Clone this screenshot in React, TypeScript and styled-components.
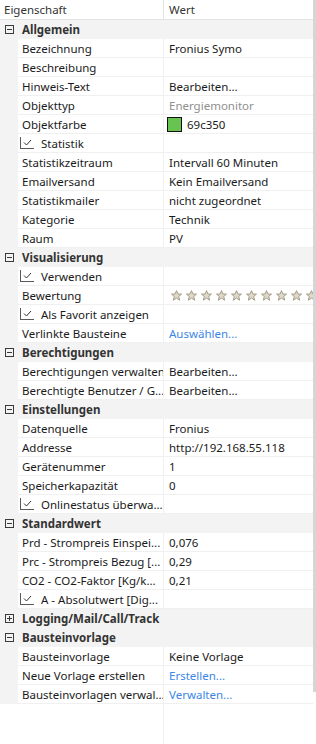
import React from 'react';
import styled, { createGlobalStyle } from 'styled-components';

const GlobalStyle = createGlobalStyle`
  html, body {
    margin: 0;
    padding: 0;
    background: #ffffff;
  }
  body {
    font-family: "Noto Sans", "Open Sans", sans-serif;
    font-size: 11.5px;
    color: #1a1a1a;
  }
`;

const Frame = styled.div`
  display: grid;
  grid-template-columns: 313px 3px;
  width: 316px;
  height: 744px;
  overflow: hidden;
`;

const Grid = styled.div`
  display: flex;
  flex-direction: column;
  min-width: 0;
`;

const ScrollTrack = styled.div`
  display: flex;
  flex-direction: column;
`;

const ScrollThumb = styled.div`
  height: 692px;
  background: #d6d6d6;
`;

const HeaderRow = styled.div`
  display: grid;
  grid-template-columns: 164px 1fr;
  height: 20px;
  box-sizing: border-box;
  border-bottom: 1px solid #e3e3e3;
  color: #333333;
`;

const HeaderCell = styled.div<{ $first?: boolean }>`
  display: flex;
  align-items: center;
  padding-left: ${(p) => (p.$first ? '4px' : '5px')};
  border-right: ${(p) => (p.$first ? '1px solid #e3e3e3' : 'none')};
`;

const SectionRow = styled.div`
  display: grid;
  grid-template-columns: 18px 1fr;
  height: 19px;
  background: #f3f3f3;
  align-items: center;
`;

const SectionTitle = styled.div`
  font-weight: 700;
  color: #333333;
  padding-left: 4px;
`;

const ExpanderBox = styled.div`
  display: flex;
  justify-content: center;
`;

const ItemRow = styled.div`
  display: grid;
  grid-template-columns: 18px 146px 1fr;
  height: 19px;
`;

const Gutter = styled.div`
  background: #f3f3f3;
`;

const Cell = styled.div<{ $label?: boolean; $tone?: 'muted' | 'link' }>`
  display: flex;
  align-items: center;
  gap: 5px;
  box-sizing: border-box;
  background: #ffffff;
  border-bottom: 1px solid #f0f0f0;
  border-right: ${(p) => (p.$label ? '1px solid #f0f0f0' : 'none')};
  padding-left: ${(p) => (p.$label ? '4px' : '5px')};
  white-space: nowrap;
  overflow: hidden;
  color: ${(p) => (p.$tone === 'muted' ? '#8f8f8f' : p.$tone === 'link' ? '#3b86e6' : '#1a1a1a')};
`;

const CheckBox = styled.span`
  display: inline-flex;
  align-items: center;
  justify-content: center;
  width: 13px;
  height: 11px;
  margin-left: -2px;
  margin-right: 2px;
  border-left: 1px solid #5a5a5a;
  border-bottom: 1px solid #5a5a5a;
  flex-shrink: 0;
`;

const Swatch = styled.span<{ $color: string }>`
  width: 13px;
  height: 13px;
  margin-left: -2px;
  background: ${(p) => p.$color};
  border: 1px solid #111111;
  flex-shrink: 0;
`;

const Stars = styled.span`
  display: flex;
  gap: 4px;
  margin-left: 2px;
`;

const Filler = styled.div`
  flex: 1;
  display: grid;
  grid-template-columns: 164px 1fr;
`;

const FillerLeft = styled.div`
  border-right: 1px solid #f0f0f0;
`;

const Expander: React.FC<{ open: boolean }> = ({ open }) => (
  <svg width="9" height="9" viewBox="0 0 9 9">
    <rect x="0.5" y="0.5" width="8" height="8" fill="none" stroke="#3a3a3a" />
    <line x1="2" y1="4.5" x2="7" y2="4.5" stroke="#3a3a3a" />
    {!open && <line x1="4.5" y1="2" x2="4.5" y2="7" stroke="#3a3a3a" />}
  </svg>
);

const Check = () => (
  <svg width="9" height="7" viewBox="0 0 9 7">
    <polyline points="1,3.5 3.5,6 8,1" fill="none" stroke="#333" strokeWidth="1" />
  </svg>
);

const Star = () => (
  <svg width="11" height="11" viewBox="0 0 11 11">
    <polygon
      points="5.5,0.6 6.9,4 10.5,4.1 7.7,6.4 8.7,10.2 5.5,8.1 2.3,10.2 3.3,6.4 0.5,4.1 4.1,4"
      fill="#ded9cb"
      stroke="#a59d88"
      strokeWidth="1"
    />
  </svg>
);

type Item = {
  label: string;
  value?: React.ReactNode;
  check?: boolean;
  tone?: 'muted' | 'link';
};

type Section = { title: string; open: boolean; items: Item[] };

const sections: Section[] = [
  {
    title: 'Allgemein',
    open: true,
    items: [
      { label: 'Bezeichnung', value: 'Fronius Symo' },
      { label: 'Beschreibung' },
      { label: 'Hinweis-Text', value: 'Bearbeiten...' },
      { label: 'Objekttyp', value: 'Energiemonitor', tone: 'muted' },
      {
        label: 'Objektfarbe',
        value: (
          <>
            <Swatch $color="#69c350" />
            69c350
          </>
        ),
      },
      { label: 'Statistik', check: true },
      { label: 'Statistikzeitraum', value: 'Intervall 60 Minuten' },
      { label: 'Emailversand', value: 'Kein Emailversand' },
      { label: 'Statistikmailer', value: 'nicht zugeordnet' },
      { label: 'Kategorie', value: 'Technik' },
      { label: 'Raum', value: 'PV' },
    ],
  },
  {
    title: 'Visualisierung',
    open: true,
    items: [
      { label: 'Verwenden', check: true },
      {
        label: 'Bewertung',
        value: (
          <Stars>
            {Array.from({ length: 10 }).map((_, i) => (
              <Star key={i} />
            ))}
          </Stars>
        ),
      },
      { label: 'Als Favorit anzeigen', check: true },
      { label: 'Verlinkte Bausteine', value: 'Auswählen...', tone: 'link' },
    ],
  },
  {
    title: 'Berechtigungen',
    open: true,
    items: [
      { label: 'Berechtigungen verwalten', value: 'Bearbeiten...' },
      { label: 'Berechtigte Benutzer / G...', value: 'Bearbeiten...' },
    ],
  },
  {
    title: 'Einstellungen',
    open: true,
    items: [
      { label: 'Datenquelle', value: 'Fronius' },
      { label: 'Addresse', value: 'http://192.168.55.118' },
      { label: 'Gerätenummer', value: '1' },
      { label: 'Speicherkapazität', value: '0' },
      { label: 'Onlinestatus überwa...', check: true },
    ],
  },
  {
    title: 'Standardwert',
    open: true,
    items: [
      { label: 'Prd - Strompreis Einspei...', value: '0,076' },
      { label: 'Prc - Strompreis Bezug [...', value: '0,29' },
      { label: 'CO2 - CO2-Faktor [Kg/k...', value: '0,21' },
      { label: 'A - Absolutwert [Dig...', check: true },
    ],
  },
  { title: 'Logging/Mail/Call/Track', open: false, items: [] },
  {
    title: 'Bausteinvorlage',
    open: true,
    items: [
      { label: 'Bausteinvorlage', value: 'Keine Vorlage' },
      { label: 'Neue Vorlage erstellen', value: 'Erstellen...', tone: 'link' },
      { label: 'Bausteinvorlagen verwal...', value: 'Verwalten...', tone: 'link' },
    ],
  },
];

const App: React.FC = () => {
  return (
    <>
      <GlobalStyle />
      <Frame>
        <Grid>
          <HeaderRow>
            <HeaderCell $first>Eigenschaft</HeaderCell>
            <HeaderCell>Wert</HeaderCell>
          </HeaderRow>
          {sections.map((s) => (
            <React.Fragment key={s.title}>
              <SectionRow>
                <ExpanderBox>
                  <Expander open={s.open} />
                </ExpanderBox>
                <SectionTitle>{s.title}</SectionTitle>
              </SectionRow>
              {s.items.map((it) => (
                <ItemRow key={it.label}>
                  <Gutter />
                  <Cell $label>
                    {it.check && (
                      <CheckBox>
                        <Check />
                      </CheckBox>
                    )}
                    {it.label}
                  </Cell>
                  <Cell $tone={it.tone}>{it.value}</Cell>
                </ItemRow>
              ))}
            </React.Fragment>
          ))}
          <Filler>
            <FillerLeft />
            <div />
          </Filler>
        </Grid>
        <ScrollTrack>
          <ScrollThumb />
        </ScrollTrack>
      </Frame>
    </>
  );
};

export default App;
